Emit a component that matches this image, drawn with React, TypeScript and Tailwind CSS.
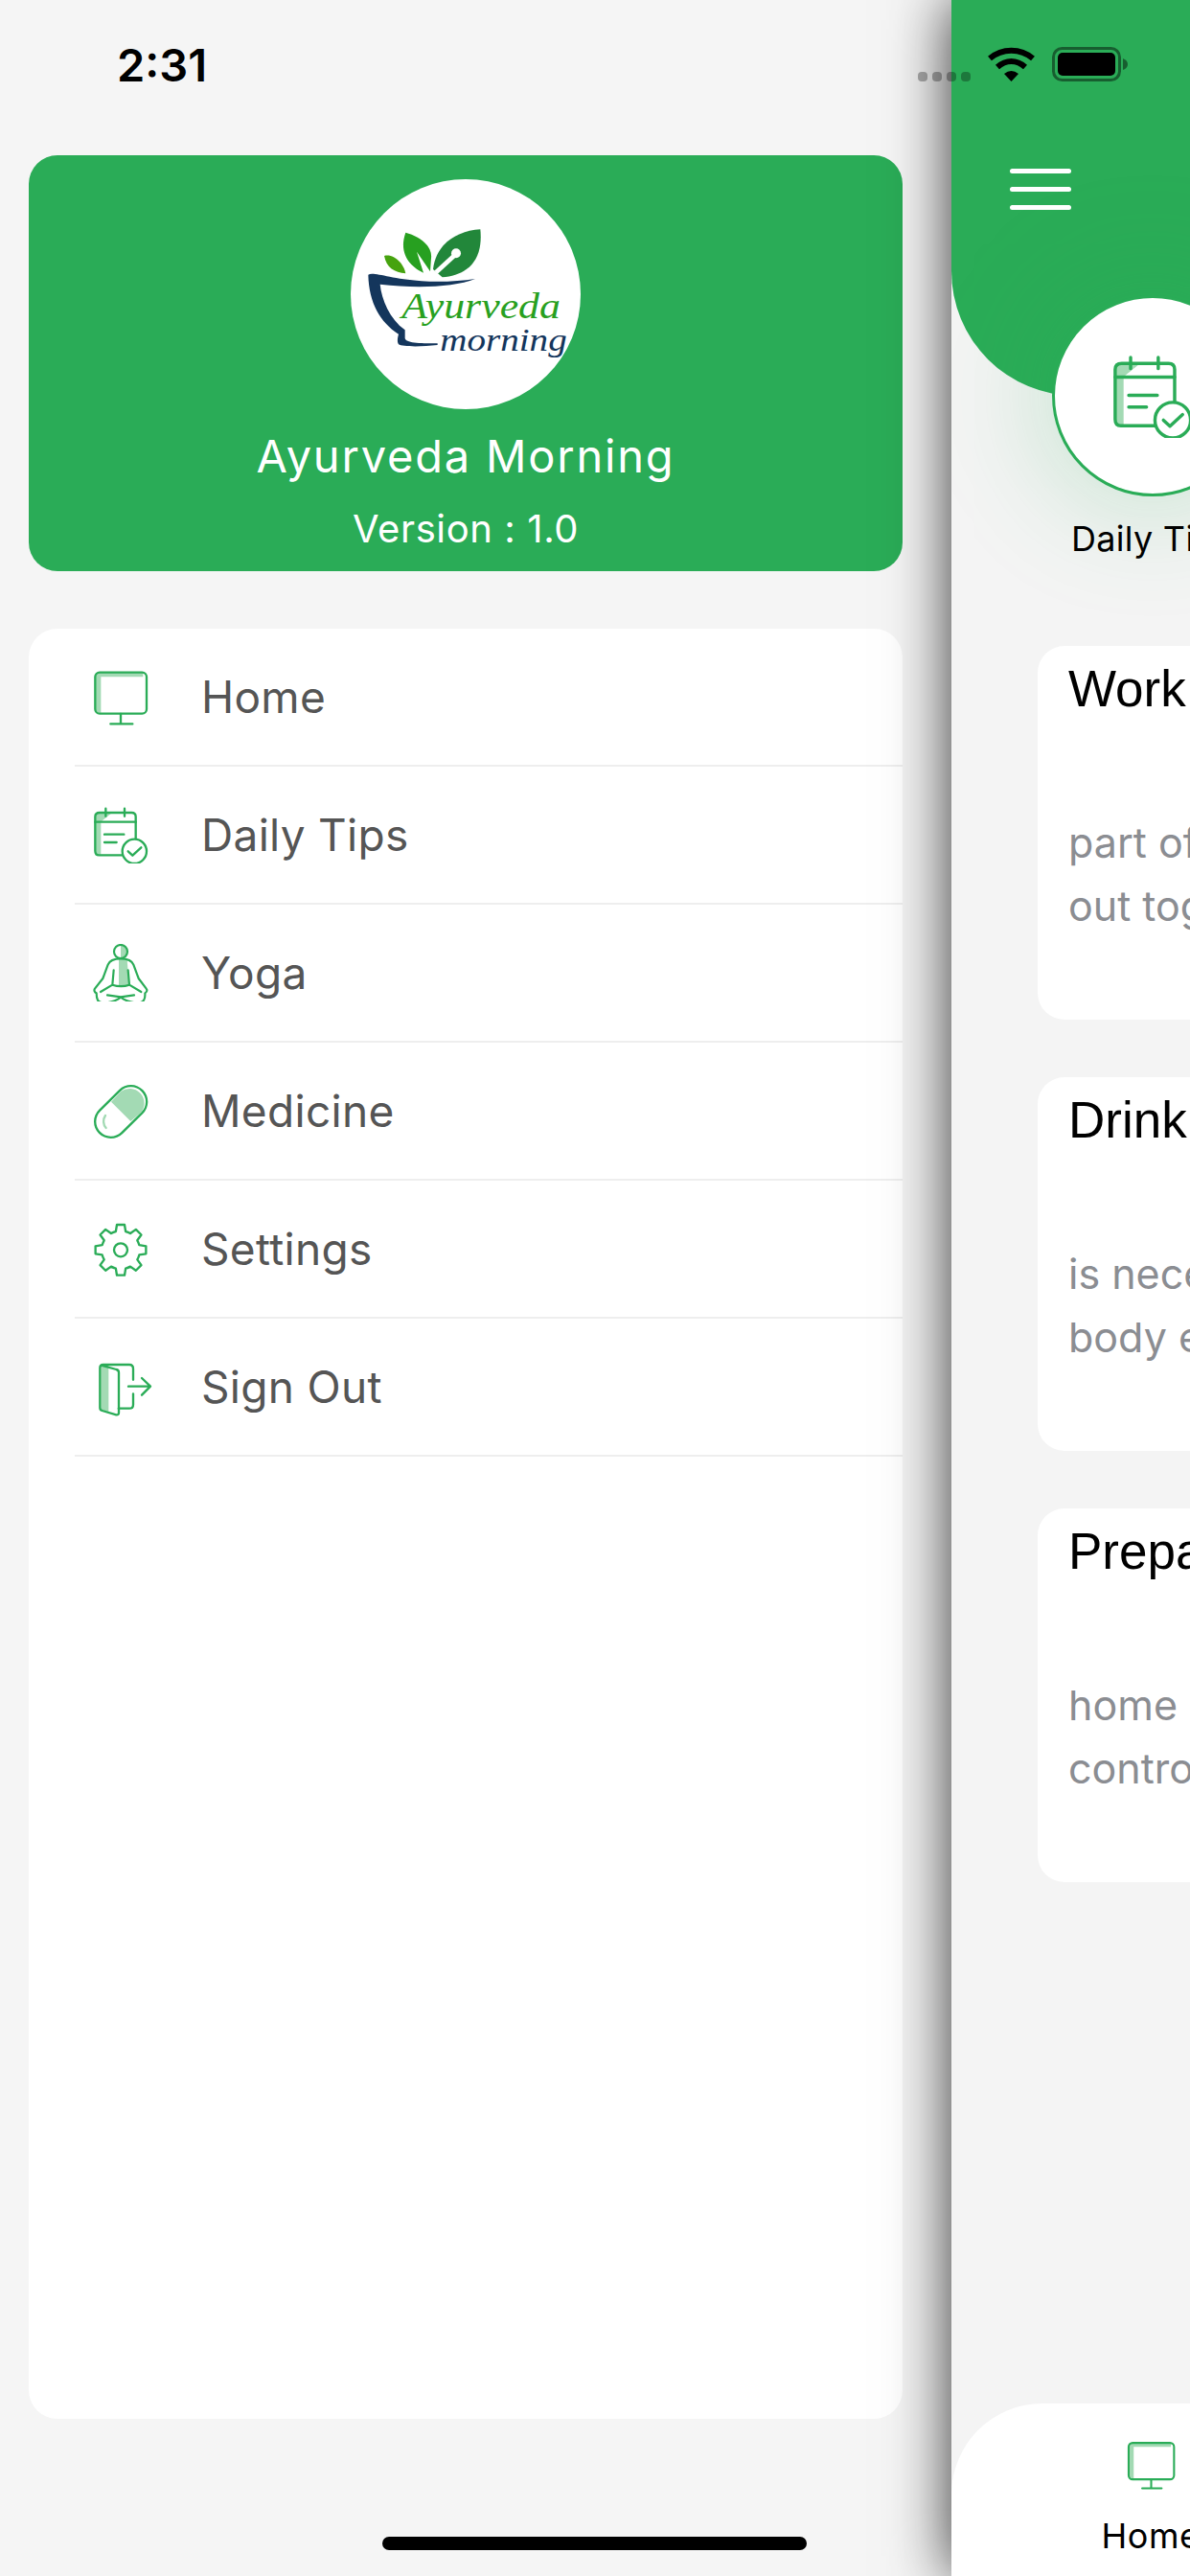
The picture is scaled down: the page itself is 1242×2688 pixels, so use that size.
import React from 'react';

const GREEN = '#2aac57';
const LIGHT = '#a3dab4';

const sans = 'font-["Inter","Liberation_Sans",sans-serif]';

const gearPath = () => {
  const cx = 198;
  const cy = 646;
  const pt = (r: number, a: number) =>
    `${(cx + r * Math.sin(a)).toFixed(1)} ${(cy - r * Math.cos(a)).toFixed(1)}`;
  let d = '';
  for (let i = 0; i < 8; i++) {
    const a = (i * Math.PI) / 4;
    d += `${i === 0 ? 'M' : 'A60 60 0 0 1'} ${pt(60, a - 0.26)} L${pt(80, a - 0.15)} L${pt(80, a + 0.15)} L${pt(60, a + 0.26)} `;
  }
  return d + 'A60 60 0 0 1 ' + pt(60, -0.26) + ' Z';
};

const HomeIcon = ({ className }: { className: string }) => (
  <svg viewBox="108 84 180 180" className={className} fill="none" stroke={GREEN} strokeWidth="7" strokeLinecap="round" strokeLinejoin="round">
    <path d="M118 112 Q118 98 132 98 L268 98 L268 112 L136 112 L136 225 L118 220 Z" fill={LIGHT} stroke="none" />
    <rect x="118" y="98" width="161" height="129" rx="14" />
    <path d="M198 228 V259 M166 259 H235" />
  </svg>
);

const TipsIcon = ({ className }: { className: string }) => (
  <svg viewBox="108 516 180 180" className={className} fill="none" stroke={GREEN} strokeWidth="7" strokeLinecap="round" strokeLinejoin="round">
    <path d="M118 566 V550 Q118 538 132 538 L170 538 L135 566 Z" fill={LIGHT} stroke="none" />
    <path d="M118 566 H136 V668 H130 Q118 668 118 656 Z" fill={LIGHT} stroke="none" />
    <path d="M205 670 H130 Q118 670 118 656 V550 Q118 537 132 537 H232 Q245 537 245 550 V622" />
    <path d="M118 566 H245 M151 524 V548 M210 524 V548 M147 605 H208 M147 630 H185" />
    <circle cx="241" cy="658" r="38" fill="#fff" />
    <path d="M221 658 L235 671 L262 646" />
  </svg>
);

const YogaIcon = ({ className }: { className: string }) => (
  <svg viewBox="108 948 180 180" className={className} fill="none" stroke={GREEN} strokeWidth="6.5" strokeLinecap="round" strokeLinejoin="round">
    <path d="M192 996 H218 L224 1078 H192 Z" fill={LIGHT} stroke="none" />
    <path d="M198 951 A21 21 0 0 1 198 993 Z" fill={LIGHT} stroke="none" />
    <circle cx="198" cy="972" r="21" />
    <path d="M198 994 C175 994 163 999 158 1013 L142 1056 L117 1088 C113 1094 117 1100 122 1102 C122 1120 125 1132 145 1132 C165 1132 185 1125 198 1115 C212 1125 232 1132 252 1132 C272 1132 275 1118 274 1102 C280 1098 282 1092 278 1088 L254 1056 L238 1013 C233 999 220 994 198 994 Z" />
    <path d="M176 1030 L172 1076 L135 1098 M221 1030 L225 1076 L262 1098 M172 1076 C190 1082 208 1082 225 1076 M156 1108 L198 1114 L240 1108" />
  </svg>
);

const PillIcon = ({ className }: { className: string }) => (
  <svg viewBox="108 120 180 180" className={className} fill="none" strokeLinecap="round">
    <line x1="167" y1="244" x2="230" y2="182" stroke={GREEN} strokeWidth="106" />
    <line x1="167" y1="244" x2="230" y2="182" stroke="#fff" strokeWidth="92" />
    <path d="M168 182 L198 150 A46 46 0 0 1 262 215 L229 243 Z" fill={LIGHT} />
    <path d="M150 225 C141 238 143 254 152 264" stroke={LIGHT} strokeWidth="7" />
  </svg>
);

const GearIcon = ({ className }: { className: string }) => (
  <svg viewBox="108 552 180 180" className={className} fill="none" stroke={GREEN} strokeWidth="7" strokeLinecap="round" strokeLinejoin="round">
    <path d={gearPath()} />
    <circle cx="198" cy="646" r="21" />
  </svg>
);

const SignOutIcon = ({ className }: { className: string }) => (
  <svg viewBox="108 984 180 180" className={`${className} overflow-visible`} fill="none" stroke={GREEN} strokeWidth="7" strokeLinecap="round" strokeLinejoin="round">
    <path d="M136 1008 L160 1012 V1152 L136 1146 Z" fill={LIGHT} stroke="none" />
    <path d="M191 1142 H225 Q237 1142 237 1130 V1096 M237 1052 V1018 Q237 1005 225 1005 H143 Q133 1005 133 1015 V1140 Q133 1147 140 1149 L184 1162 Q192 1163 192 1155 V1030 Q192 1022 184 1020 L137 1007" />
    <path d="M222 1073 H290 M264 1047 L291 1073 L264 1100" />
  </svg>
);

const menu = [
  { label: 'Home', Icon: HomeIcon },
  { label: 'Daily Tips', Icon: TipsIcon },
  { label: 'Yoga', Icon: YogaIcon },
  { label: 'Medicine', Icon: PillIcon },
  { label: 'Settings', Icon: GearIcon },
  { label: 'Sign Out', Icon: SignOutIcon },
];

const tips = [
  { title: 'Work', lines: ['part of', 'out tog'] },
  { title: 'Drink', lines: ['is nece', 'body e'] },
  { title: 'Prepa', lines: ['home c', 'contro'] },
];

const Logo = () => (
  <svg viewBox="78 53 720 720" className="w-full h-full">
    <path d="M183 293 C215 285 245 320 250 348 C215 345 190 330 183 293 Z" fill="#46a30f" />
    <path d="M250 220 C290 230 335 260 330 300 L327 342 L285 280 L306 346 C270 330 225 290 250 220 Z" fill="#27a020" />
    <path d="M484 210 C410 215 345 255 336 335 L365 360 C430 355 495 320 484 210 Z" fill="#22873a" />
    <path d="M408 287 L345 345" stroke="#fff" strokeWidth="14" />
    <circle cx="408" cy="285" r="15" fill="#fff" />
    <path d="M133 352 C150 342 200 365 300 372 C360 376 420 372 468 365 C400 392 280 395 170 382 C175 430 200 490 248 525 L248 550 C250 565 290 567 350 567 L350 572 C300 578 240 578 228 570 C222 560 226 545 228 538 C170 500 135 440 133 352 Z" fill="#14365c" />
    <text x="238" y="487" fill="#27a020" fontSize="112" fontStyle="italic" textLength="497" lengthAdjust="spacingAndGlyphs" fontFamily="'Liberation Serif', serif">Ayurveda</text>
    <text x="358" y="590" fill="#14365c" fontSize="104" fontStyle="italic" textLength="397" lengthAdjust="spacingAndGlyphs" fontFamily="'Liberation Serif', serif">morning</text>
  </svg>
);

const StatusBar = () => (
  <div className="absolute top-0 left-0 w-full h-[100px] z-20 pointer-events-none">
    <span className={`absolute left-[122px] top-[40px] text-[47px] leading-[56px] font-semibold text-black ${sans}`}>2:31</span>
    <div className="absolute left-[958px] top-[75px] flex gap-[5px]">
      {[0, 1, 2, 3].map((d) => (
        <span key={d} className="w-[10px] h-[10px] rounded-[4px] bg-black/30" />
      ))}
    </div>
    <svg viewBox="0 0 49 36" className="absolute left-[1031px] top-[49px] w-[49px] h-[36px]" fill="none" stroke="#000" strokeWidth="6">
      <path d="M2 12 C15 1 34 1 47 12" />
      <path d="M10 21 C19 13 30 13 39 21" />
      <path d="M17 28 Q24.5 22 32 28 L24.5 36 Z" fill="#000" stroke="none" />
    </svg>
    <svg viewBox="0 0 79 36" className="absolute left-[1098px] top-[49px] w-[79px] h-[36px]">
      <rect x="1.5" y="1.5" width="69" height="33" rx="9" fill="none" stroke="#000" strokeOpacity="0.45" strokeWidth="3" />
      <rect x="6" y="6" width="60" height="24" rx="5" fill="#000" />
      <path d="M74 12 Q79 14 79 18 Q79 22 74 24 Z" fill="#000" fillOpacity="0.45" />
    </svg>
  </div>
);

export default function App() {
  return (
    <div className={`relative w-[1242px] h-[2688px] overflow-hidden flex bg-[#f5f5f5] ${sans}`}>
      <StatusBar />

      {/* drawer */}
      <div className="w-[993px] shrink-0 pl-[30px] pr-[51px] pt-[162px] flex flex-col">
        <div className="h-[434px] rounded-[30px] bg-[#2aac57] flex flex-col items-center pt-[25px] text-white">
          <div className="w-[240px] h-[240px] rounded-full bg-white overflow-hidden">
            <Logo />
          </div>
          <p className="mt-[21px] text-[47px] leading-[56px] tracking-[1.8px]">Ayurveda Morning</p>
          <p className="mt-[24px] text-[40px] leading-[48px] tracking-[0.6px]">Version : 1.0</p>
        </div>

        <div className="mt-[60px] h-[1868px] rounded-[30px] bg-white">
          {menu.map(({ label, Icon }) => (
            <div key={label} className="ml-[48px] h-[144px] flex items-center border-b-2 border-[#eeeeee]">
              <Icon className="ml-[18px] w-[60px] h-[60px] shrink-0" />
              <span className="ml-[54px] text-[46px] tracking-[0.3px] text-[#555555]">{label}</span>
            </div>
          ))}
        </div>
      </div>

      {/* main screen, pushed aside by the drawer */}
      <div className="w-[249px] shrink-0 h-full relative z-10 flex flex-col overflow-hidden bg-[#f4f4f4] shadow-[0_0_60px_rgba(0,0,0,0.8)]">
        <div className="h-[413px] shrink-0 w-[1242px] bg-[#2aac57] rounded-bl-[130px] pl-[61px] pt-[176px]">
          <div className="w-[64px] flex flex-col gap-[14px]">
            <span className="h-[5px] rounded-full bg-white" />
            <span className="h-[5px] rounded-full bg-white" />
            <span className="h-[5px] rounded-full bg-white" />
          </div>
        </div>

        <div className="-mt-[105px] ml-[105px] w-[210px] shrink-0 flex flex-col items-center">
          <div className="w-[210px] h-[210px] shrink-0 rounded-full bg-white border-[3px] border-[#2aac57] flex items-center justify-center shadow-[0_0_130px_rgba(42,172,87,0.3)]">
            <TipsIcon className="w-[88px] h-[88px]" />
          </div>
          <span className="mt-[22px] text-[36px] leading-[44px] tracking-[0.3px] text-black whitespace-nowrap">Daily Tips</span>
        </div>

        <div className="mt-[90px] ml-[90px] w-[1000px] flex flex-col gap-[60px]">
          {tips.map((tip) => (
            <div key={tip.title} className="h-[390px] shrink-0 rounded-[28px] bg-white pl-[32px] pt-[14px]">
              <p className="text-[53px] leading-[62px] text-black font-['Liberation_Sans',sans-serif]">{tip.title}</p>
              <div className="mt-[96px] text-[43px] leading-[66px] text-[#8b8d92]">
                {tip.lines.map((line) => (
                  <p key={line}>{line}</p>
                ))}
              </div>
            </div>
          ))}
        </div>

        <div className="mt-auto h-[180px] shrink-0 w-[1242px] bg-white rounded-tl-[95px] pt-[37px] pl-[115px]">
          <div className="w-[186px] flex flex-col items-center">
            <HomeIcon className="w-[53px] h-[53px]" />
            <span className="mt-[26px] text-[36px] leading-[44px] tracking-[0.5px] text-black">Home</span>
          </div>
        </div>
      </div>

      <div className="absolute left-[399px] top-[2647px] w-[443px] h-[14px] rounded-full bg-black z-20" />
    </div>
  );
}
